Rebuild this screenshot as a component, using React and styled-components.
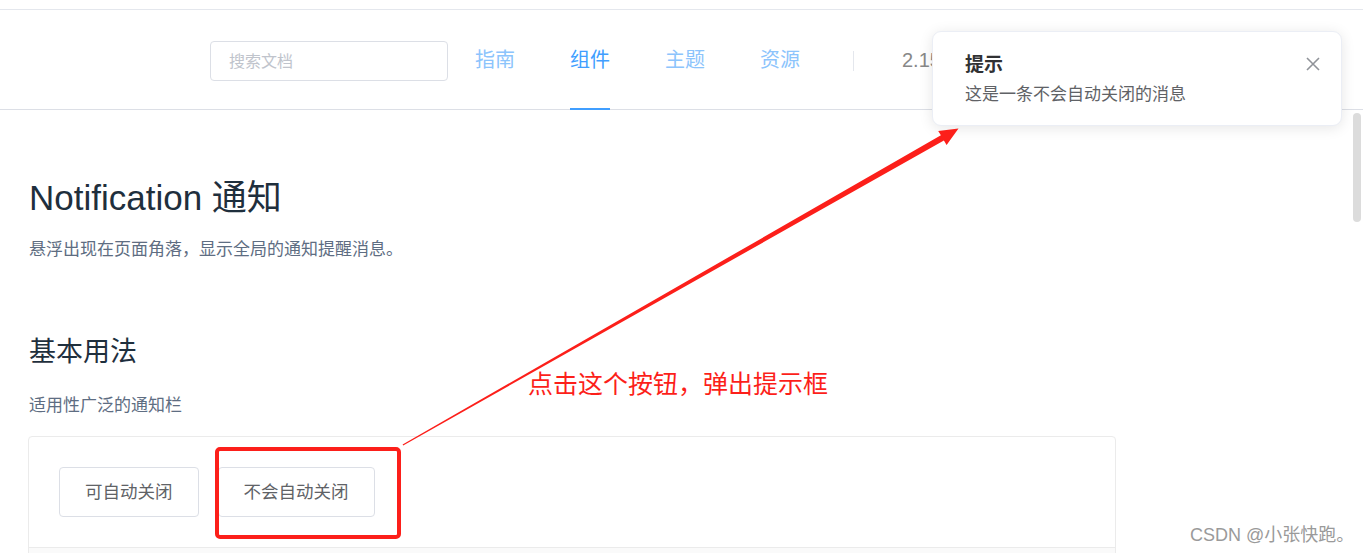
import React from "react";
import styled, { createGlobalStyle } from "styled-components";

const Global = createGlobalStyle`
  html, body { margin: 0; padding: 0; background: #fff; overflow: hidden; }
  body { font-family: "Liberation Sans", "Noto Sans CJK SC", sans-serif; }
  * { box-sizing: border-box; }
`;

const Page = styled.div`
  position: relative;
  width: 1363px;
  height: 553px;
  overflow: hidden;
  background: #fff;
`;

const TopStrip = styled.div`
  height: 10px;
  border-bottom: 1px solid #e4e7ed;
`;

const Header = styled.header`
  height: 100px;
  border-bottom: 1px solid #dcdfe6;
  display: flex;
  align-items: center;
  padding-left: 210px;
`;

const Search = styled.input`
  width: 238px;
  height: 40px;
  margin-top: 3px;
  border: 1px solid #dcdfe6;
  border-radius: 4px;
  padding: 0 0 2px 18px;
  font-family: "Noto Sans CJK SC", sans-serif;
  font-size: 16px;
  color: #606266;
  outline: none;
  &::placeholder { color: #c0c4cc; }
`;

const Nav = styled.nav`
  display: flex;
  align-items: stretch;
  height: 100%;
  margin-left: 27px;
  gap: 55px;
`;

const NavItem = styled.a`
  display: flex;
  align-items: center;
  padding-bottom: 2px;
  font-family: "Noto Sans CJK SC", sans-serif;
  font-size: 20px;
  color: ${(p) => (p.$active ? "#409eff" : "#8cc4fc")};
  border-bottom: 2px solid ${(p) => (p.$active ? "#409eff" : "transparent")};
  margin-bottom: -1px;
  text-decoration: none;
`;

const Divider = styled.span`
  width: 1px;
  height: 20px;
  background: #e4e7ed;
  margin: 3px 0 0 53px;
`;

const Version = styled.span`
  margin: 1px 0 0 48px;
  font-size: 20px;
  color: #888;
`;

const Main = styled.main`
  padding-left: 28px;
  width: 1116px;
`;

const Title = styled.h2`
  margin: 68px 0 0 1px;
  font-weight: 400;
  font-size: 35px;
  line-height: 40px;
  color: #1f2f3d;
`;

const Desc = styled.p`
  margin: ${(p) => p.$mt || 18}px 0 0 1px;
  font-family: "Noto Sans CJK SC", sans-serif;
  font-size: 17px;
  line-height: 24px;
  color: #5e6d82;
`;

const SubTitle = styled.h3`
  margin: 72px 0 0 1px;
  font-family: "Noto Sans CJK SC", sans-serif;
  font-weight: 400;
  font-size: 27px;
  line-height: 36px;
  color: #1f2f3d;
`;

const DemoBox = styled.div`
  margin-top: 20px;
  border: 1px solid #ebebeb;
  border-radius: 4px;
`;

const DemoSource = styled.div`
  display: flex;
  gap: 19px;
  padding: 30px;
  border-bottom: 1px solid #ebebeb;
`;

const DemoControl = styled.div`
  height: 40px;
  background: #fafafa;
`;

const Button = styled.button`
  height: 50px;
  padding: 0 25px 4px;
  background: #fff;
  border: 1px solid #dcdfe6;
  border-radius: 4px;
  font-family: "Noto Sans CJK SC", sans-serif;
  font-size: 17.5px;
  color: #606266;
  cursor: pointer;
`;

const Notice = styled.div`
  position: absolute;
  top: 31px;
  left: 932px;
  width: 410px;
  height: 95px;
  padding: 18px 20px 19px 32px;
  background: #fff;
  border: 1px solid #ebeef5;
  border-radius: 9px;
  box-shadow: 0 2px 14px rgba(0, 0, 0, 0.1);
  font-family: "Noto Sans CJK SC", sans-serif;
`;

const NoticeTitle = styled.div`
  font-size: 19px;
  line-height: 26px;
  font-weight: 700;
  color: #303133;
`;

const NoticeText = styled.div`
  margin-top: 5px;
  font-size: 17px;
  line-height: 24px;
  color: #606266;
`;

const Close = styled.svg`
  position: absolute;
  top: 25px;
  right: 21px;
  width: 14px;
  height: 14px;
`;

const Annotation = styled.svg`
  position: absolute;
  left: 0;
  top: 0;
  pointer-events: none;
`;

const RedFrame = styled.div`
  position: absolute;
  left: 215px;
  top: 447px;
  width: 186px;
  height: 92px;
  border: 4px solid #fc1f1a;
  border-radius: 5px;
`;

const RedText = styled.div`
  position: absolute;
  left: 528px;
  top: 367px;
  font-family: "Noto Sans CJK SC", sans-serif;
  font-size: 25px;
  line-height: 30px;
  color: #fc1f1a;
  white-space: nowrap;
`;

const Watermark = styled.div`
  position: absolute;
  left: 1190px;
  top: 523px;
  font-size: 18px;
  line-height: 24px;
  color: #9a9a9a;
  white-space: nowrap;
`;

const Thumb = styled.div`
  position: absolute;
  left: 1353px;
  top: 113px;
  width: 8px;
  height: 109px;
  border-radius: 4px;
  background: #dcdcdc;
`;

export default function App() {
  const navs = ["指南", "组件", "主题", "资源"];
  return (
    <Page>
      <Global />
      <TopStrip />
      <Header>
        <Search placeholder="搜索文档" />
        <Nav>
          {navs.map((n) => (
            <NavItem key={n} $active={n === "组件"}>
              {n}
            </NavItem>
          ))}
        </Nav>
        <Divider />
        <Version>2.15.1</Version>
      </Header>
      <Main>
        <Title>Notification 通知</Title>
        <Desc>悬浮出现在页面角落，显示全局的通知提醒消息。</Desc>
        <SubTitle>基本用法</SubTitle>
        <Desc $mt={24}>适用性广泛的通知栏</Desc>
        <DemoBox>
          <DemoSource>
            <Button>可自动关闭</Button>
            <Button>不会自动关闭</Button>
          </DemoSource>
          <DemoControl />
        </DemoBox>
      </Main>

      <Thumb />

      <Notice>
        <NoticeTitle>提示</NoticeTitle>
        <NoticeText>这是一条不会自动关闭的消息</NoticeText>
        <Close viewBox="0 0 14 14">
          <path d="M1 1 L13 13 M13 1 L1 13" stroke="#909399" strokeWidth="1.6" fill="none" />
        </Close>
      </Notice>

      <RedFrame />
      <RedText>点击这个按钮，弹出提示框</RedText>
      <Annotation width="1363" height="553" viewBox="0 0 1363 553">
        <polygon
          points="403.2,445.4 943.9,140.5 946.6,145 958.5,128.5 938.2,131 940.9,135.3 402.6,444.4"
          fill="#fc1f1a"
        />
      </Annotation>

      <Watermark>CSDN @小张快跑。</Watermark>
    </Page>
  );
}
